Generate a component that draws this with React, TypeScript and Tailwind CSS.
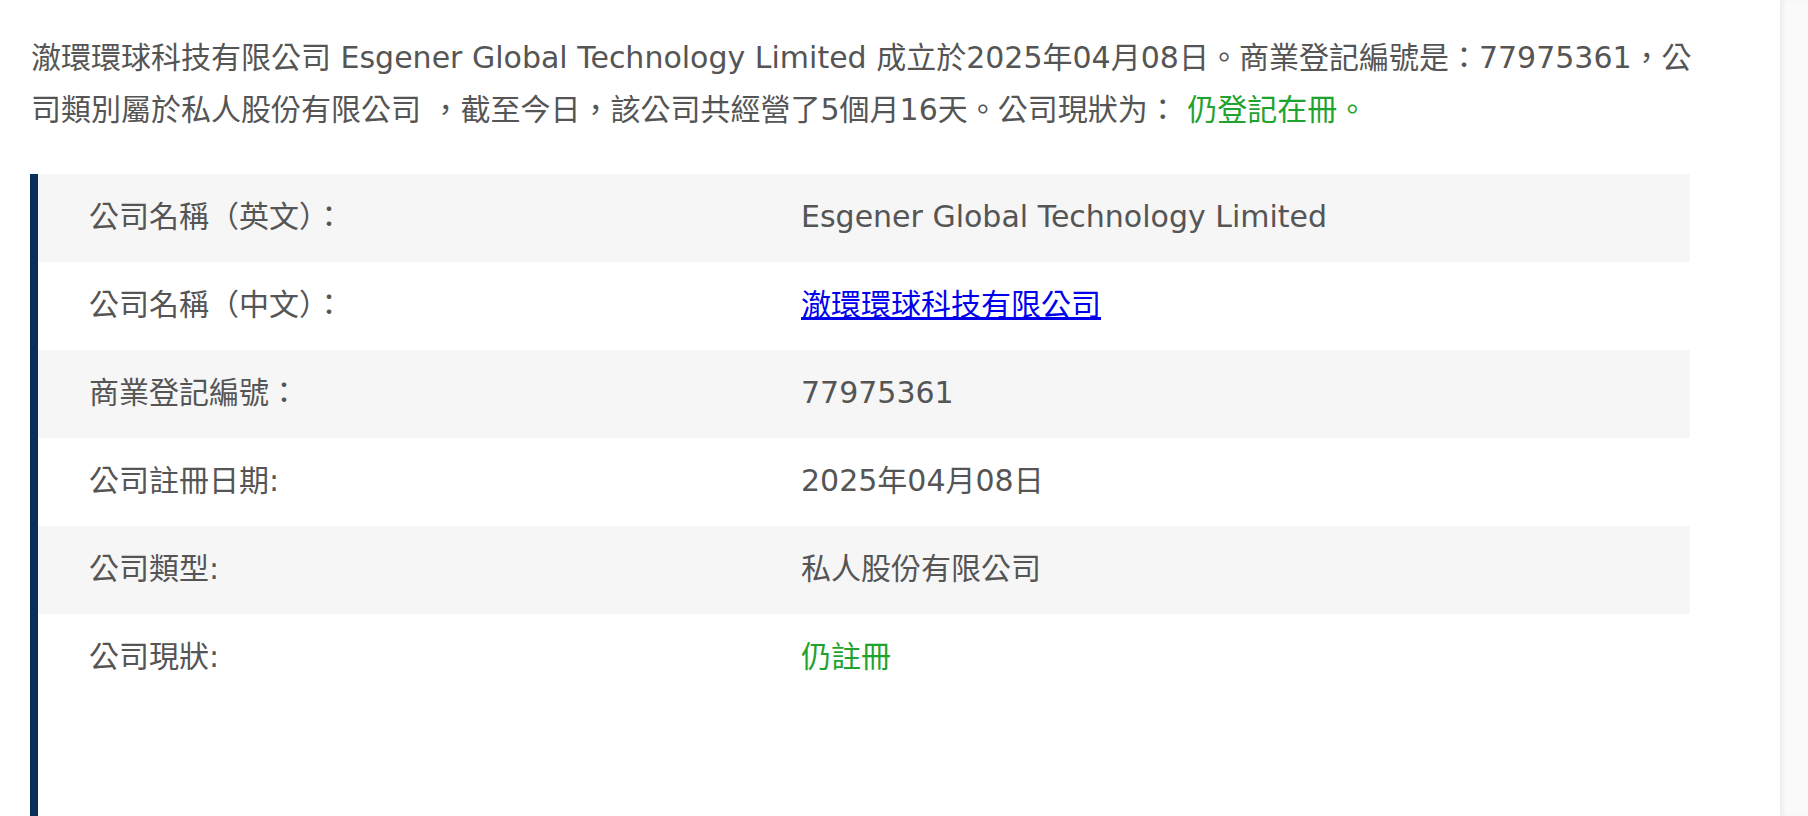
const rows = [
  { label: '公司名稱（英文）：', value: 'Esgener Global Technology Limited', kind: 'text' },
  { label: '公司名稱（中文）：', value: '澈環環球科技有限公司', kind: 'link' },
  { label: '商業登記編號：', value: '77975361', kind: 'text' },
  { label: '公司註冊日期:', value: '2025年04月08日', kind: 'text' },
  { label: '公司類型:', value: '私人股份有限公司', kind: 'text' },
  { label: '公司現狀:', value: '仍註冊', kind: 'status' },
];

const font = "font-['DejaVu_Sans','Noto_Sans_CJK_TC',sans-serif]";

export default function App() {
  return (
    <div className={`flex h-[816px] w-full overflow-hidden bg-white text-[30px] text-[#555555] ${font}`}>
      <main className="flex-1 pl-[30px] pr-[90px] pt-[32px]">
        {/* summary */}
        <p className="-mr-[16px] pl-[1px] leading-[52px]">
          澈環環球科技有限公司 Esgener Global Technology Limited 成立於2025年04月08日。商業登記編號是：77975361，公司類別屬於私人股份有限公司 ，截至今日，該公司共經營了5個月16天。公司現狀为：{' '}
          <span className="text-[#1fa32f]">仍登記在冊。</span>
        </p>

        {/* details table */}
        <div className="mt-[38px] border-l-8 border-[#0b2f5c]">
          {rows.map((row, i) => (
            <div
              key={row.label}
              className={`flex h-[88px] items-center pb-[3px] ${i % 2 === 0 ? 'bg-[#f6f6f6]' : 'bg-white'}`}
            >
              <div className="w-[763px] shrink-0 pl-[51px]">{row.label}</div>
              <div>
                {row.kind === 'link' ? (
                  <a href="#" className="text-[#0000ee] underline">
                    {row.value}
                  </a>
                ) : row.kind === 'status' ? (
                  <span className="text-[#1fa32f]">{row.value}</span>
                ) : (
                  row.value
                )}
              </div>
            </div>
          ))}
          <div className="h-[200px]" />
        </div>
      </main>

      <aside className="w-[28px] shrink-0 bg-[#fafafa] shadow-[inset_5px_0_6px_-3px_rgba(0,0,0,0.07)]" />
    </div>
  );
}
